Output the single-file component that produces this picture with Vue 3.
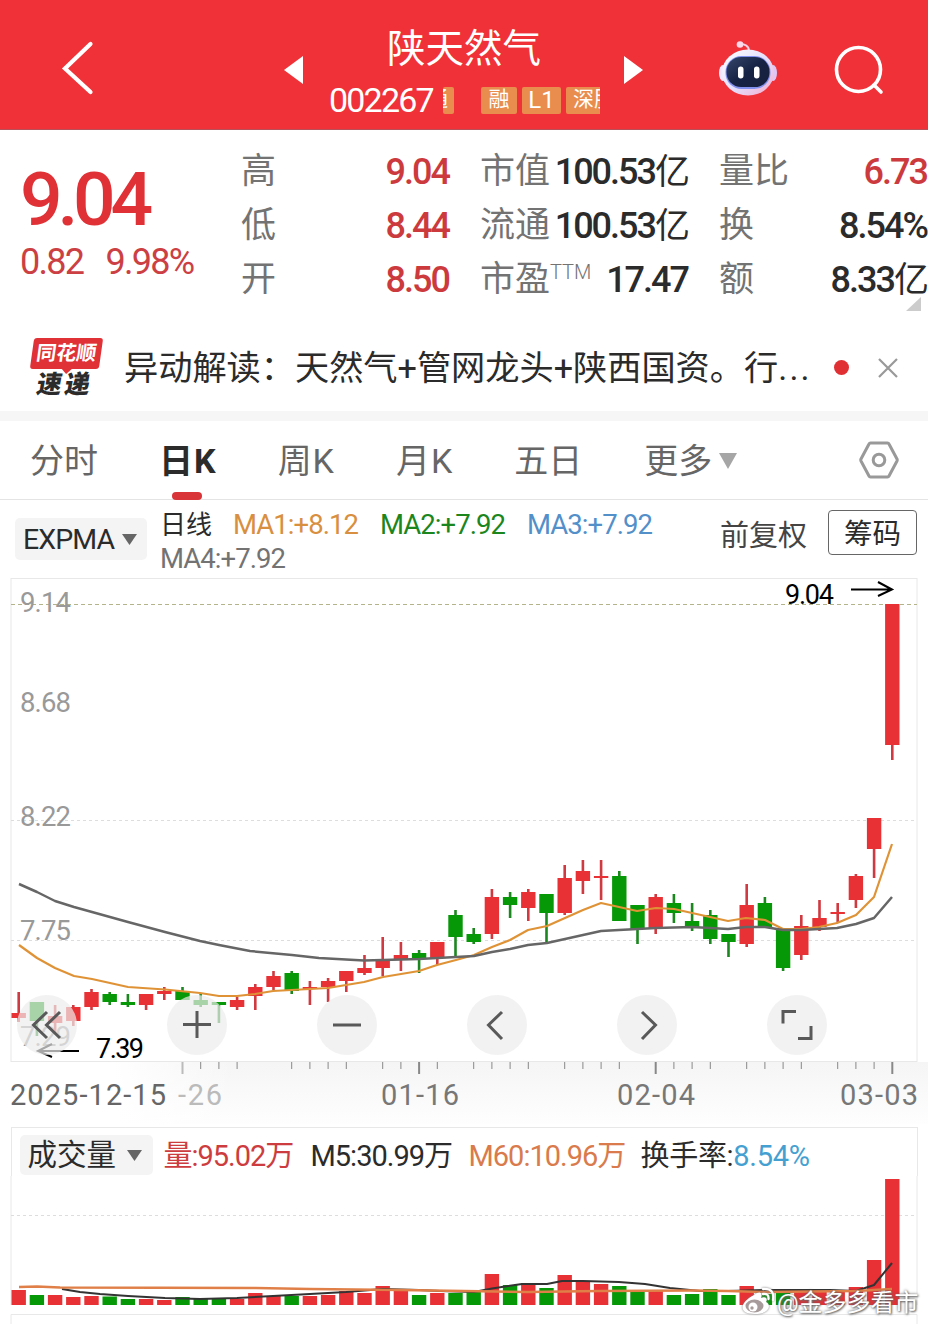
<script setup>
import { computed } from 'vue'

const stats = [
  [
    { label: '高', value: '9.04', up: true },
    { label: '低', value: '8.44', up: true },
    { label: '开', value: '8.50', up: true },
  ],
  [
    { label: '市值', value: '100.53', unit: '亿' },
    { label: '流通', value: '100.53', unit: '亿' },
    { label: '市盈', sup: 'TTM', value: '17.47' },
  ],
  [
    { label: '量比', value: '6.73', up: true },
    { label: '换', value: '8.54%' },
    { label: '额', value: '8.33', unit: '亿' },
  ],
]

const tabs = ['分时', '日K', '周K', '月K', '五日']
const activeTab = '日K'

// [direction, high, low, bodyTop, bodyBottom, volumeTop]
const days = [
  ['r', 992, 1022, 1013, 1018, 1290],
  ['g', 1002, 1036, 1002, 1021, 1295],
  ['r', 1005, 1033, 1016, 1023, 1295],
  ['r', 1005, 1026, 1007, 1021, 1297],
  ['r', 989, 1010, 992, 1007, 1296],
  ['g', 992, 1005, 994, 1002, 1296.5],
  ['g', 994, 1007, 1002, 1005, 1299],
  ['r', 994, 1010, 994, 1005, 1299],
  ['r', 987, 1000, 991, 994, 1300],
  ['g', 987, 1000, 991, 1000, 1297],
  ['g', 994, 1007, 1000, 1005, 1298],
  ['g', 1002, 1023, 1002, 1005, 1298],
  ['r', 997, 1010, 1000, 1007, 1299],
  ['r', 984, 1010, 987, 996, 1293],
  ['r', 971, 990, 976, 987, 1296],
  ['g', 971, 994, 973, 991, 1296],
  ['r', 981, 1005, 987, 989, 1296],
  ['r', 978, 1002, 981, 987, 1295],
  ['r', 971, 992, 971, 981, 1291],
  ['r', 955, 975, 968, 973, 1293],
  ['r', 937, 976, 961, 968, 1286],
  ['r', 942, 971, 955, 960, 1291],
  ['g', 950, 973, 953, 959, 1295],
  ['r', 942, 965, 942, 958, 1293],
  ['g', 910, 957, 915, 937, 1293],
  ['g', 928, 944, 934, 942, 1292],
  ['r', 889, 939, 897, 934, 1274],
  ['g', 892, 918, 897, 905, 1285],
  ['r', 889, 921, 892, 908, 1283],
  ['g', 894, 942, 894, 913, 1288],
  ['r', 865, 915, 878, 913, 1275],
  ['r', 860, 894, 871, 881, 1281],
  ['r', 860, 900, 876, 878, 1284],
  ['g', 871, 921, 876, 921, 1286],
  ['g', 905, 944, 905, 929, 1292],
  ['r', 894, 934, 897, 929, 1291],
  ['g', 894, 923, 903, 913, 1295],
  ['g', 903, 931, 921, 927, 1294],
  ['g', 910, 944, 915, 939, 1289],
  ['g', 934, 957, 934, 942, 1295],
  ['r', 884, 947, 905, 944, 1286],
  ['g', 897, 927, 903, 927, 1294],
  ['g', 929, 971, 929, 968, 1292],
  ['r', 915, 960, 926, 955, 1291],
  ['r', 900, 931, 918, 927, 1291],
  ['r', 903, 923, 912, 914, 1292],
  ['r', 874, 908, 876, 900, 1287],
  ['r', 818, 878, 818, 849, 1260],
  ['r', 604, 760, 604, 745, 1179],
]

const STEP = 18.2
const BASE = 1305

const candles = computed(() =>
  days.map(([dir, high, low, top, bottom, vol], i) => ({
    x: 18.7 + i * STEP,
    fill: dir === 'r' ? '#e83135' : '#079807',
    wick: dir === 'r' ? '#cf3a40' : '#1c871f',
    high,
    low,
    top,
    bottom,
    vol,
  })),
)

const majorTicks = [9, 22, 35, 48]
const skippedTicks = [13, 14, 19, 24, 29, 34, 39, 44]
const ticks = days
  .map((_, i) => ({ x: 18.7 + i * STEP, i, major: majorTicks.includes(i) }))
  .filter(({ i }) => i >= 9 && !skippedTicks.includes(i))

const ma1 =
  '19,945 37,958 55,968 74,976 92,979 128,987 165,989.5 200,993 219,996 237,996 255,994 273,991 310,989 328,988 346,985 364,982 383,977 401,974 419,971 437,965 456,960 474,955 492,947 510,940 528,930 547,926 565,918 583,910 601,903 619,907 637,911 656,908 674,909 692,913 710,917 728,921 746,918 765,920 783,929 801,929 819,927 837,923 856,915 874,897 892,844'
const ma4 =
  '19,884 37,892 55,901 74,907 92,912 128,922 165,932 200,941 219,945 250,951 292,955 319,958 364,960.5 383,960 419,959 456,957 474,956 492,952 510,949 528,945 547,943 583,935 601,931 619,930 656,928 692,927 728,929 746,927 765,927 783,930 801,930 819,929 837,928 856,924 874,918 892,897'
const volM5 =
  '62,1289 80,1292 100,1294 128,1296 165,1298 200,1299 237,1298 273,1296 310,1294 346,1292 383,1289 419,1290 440,1291 474,1292 492,1288.5 522,1284 547,1284 562,1281 583,1281 619,1282 645,1284 670,1288 700,1291 728,1291 765,1290 801,1290 830,1290 856,1291 874,1285 892,1263'
const volM60 =
  '19,1287 37,1286.5 60,1287.5 256,1288 310,1289 400,1290 464,1291 528,1292 600,1291 692,1290.5 728,1291 765,1292 856,1291 892,1289'

const priceLabels = [
  { text: '9.14', y: 612 },
  { text: '8.68', y: 712 },
  { text: '8.22', y: 826 },
  { text: '7.75', y: 940 },
  { text: '7.29', y: 1046 },
]

const controls = [
  'M30 17 L16.500 30 L30 43 M43 17 L29.500 30 L43 43',
  'M16 29.5 H44 M30 16 V43',
  'M16 30 H44',
  'M35 17 L21.500 30 L35 44',
  'M25 17 L38.500 30 L25 44',
  'M16 28.500 V16.500 H29 M31 43.500 H44 V31',
]
</script>

<template>
  <div class="page">
    <header class="topbar">
      <svg class="back" width="34" height="56" viewBox="0 0 34 56">
        <path d="M29.500 4 L4 28.500 L29.500 52" fill="none" stroke="#fff" stroke-width="4.200" stroke-linecap="round" />
      </svg>
      <svg class="prev" width="20" height="30" viewBox="0 0 20 30"><path d="M0 15 L19 1 V29 Z" fill="#fff" /></svg>
      <div class="stock">
        <div class="stock-name">陕天然气</div>
        <div class="stock-line">
          <span class="stock-code">002267</span>
          <span class="tags">
            <span class="tag tag--cut"><i>通</i></span>
            <span class="tag tag--rong">融</span>
            <span class="tag tag--level">L1</span>
            <span class="tag tag--end">深股通</span>
          </span>
        </div>
      </div>
      <svg class="next" width="20" height="30" viewBox="0 0 20 30"><path d="M20 15 L1 1 V29 Z" fill="#fff" /></svg>
      <svg class="robot" width="60" height="56" viewBox="0 0 60 56">
        <defs>
          <linearGradient id="shell" x1="0" y1="0" x2="1" y2="1">
            <stop offset="0" stop-color="#fff" />
            <stop offset="0.55" stop-color="#e3defb" />
            <stop offset="1" stop-color="#f6a9cb" />
          </linearGradient>
          <linearGradient id="face" x1="0" y1="0" x2="1" y2="1">
            <stop offset="0" stop-color="#34466b" />
            <stop offset="0.5" stop-color="#172344" />
            <stop offset="1" stop-color="#17203d" />
          </linearGradient>
        </defs>
        <path d="M31 10 Q30 4 22 4" fill="none" stroke="#f7cfe4" stroke-width="2" />
        <circle cx="22" cy="4.500" r="3.300" fill="#fbd9eb" />
        <ellipse cx="5" cy="33" rx="4" ry="8" fill="#f3e5fc" />
        <ellipse cx="55" cy="33" rx="4" ry="8" fill="#dec7f6" />
        <ellipse cx="30" cy="32.500" rx="26" ry="23" fill="url(#shell)" />
        <rect x="7.500" y="16" width="45" height="33" rx="16" fill="#8391ee" />
        <rect x="8.500" y="17" width="43" height="30" rx="14.500" fill="url(#face)" />
        <rect x="20" y="26.500" width="5.500" height="12" rx="2.700" fill="#fff" />
        <rect x="36" y="26.500" width="5.500" height="12" rx="2.700" fill="#fff" />
      </svg>
      <svg class="search" width="52" height="52" viewBox="0 0 52 52">
        <g fill="none" stroke="#fff" stroke-width="3.600" stroke-linecap="round">
          <circle cx="25.500" cy="24.500" r="22" />
          <path d="M41 40 L48 47" />
        </g>
      </svg>
    </header>

    <section class="quote">
      <div class="price-box">
        <div class="price">9.04</div>
        <div class="change"><span>0.82</span><span>9.98%</span></div>
      </div>
      <div v-for="(col, c) in stats" :key="c" class="stat-col">
        <div v-for="row in col" :key="row.label" class="stat">
          <span class="stat-label">{{ row.label }}<sup v-if="row.sup">{{ row.sup }}</sup></span>
          <span class="stat-value" :class="{ 'stat-value--up': row.up }">{{ row.value }}<b v-if="row.unit">{{ row.unit }}</b></span>
        </div>
      </div>
      <svg class="corner" width="15" height="14" viewBox="0 0 15 14"><path d="M15 0 V14 H0 Z" fill="#ccc" /></svg>
    </section>

    <section class="news">
      <div class="logo">
        <div class="logo-top"><span>同花顺</span></div>
        <div class="logo-bottom">速递</div>
      </div>
      <div class="news-text">异动解读：天然气+管网龙头+陕西国资。行<span>...</span></div>
      <span class="dot"></span>
      <svg class="close" width="22" height="22" viewBox="0 0 22 22">
        <path d="M2 2 L20 20 M20 2 L2 20" stroke="#999" stroke-width="2.200" />
      </svg>
    </section>

    <nav class="tabs">
      <span
        v-for="tab in tabs"
        :key="tab"
        class="tab"
        :class="{ 'tab--active': tab === activeTab, 'tab--k': tab.endsWith('K') }"
      >{{ tab }}</span>
      <span class="tab more">更多<svg width="18" height="16" viewBox="0 0 18 16"><path d="M0 0 H18 L9 16 Z" fill="#a6a6a6" /></svg></span>
      <svg class="gear" width="40" height="38" viewBox="0 0 40 38">
        <g fill="none" stroke="#999" stroke-width="3">
          <path d="M11.500 2 H28.500 Q29.500 2 30 3 L38 18 Q38.500 19 38 20 L30 35 Q29.500 36 28.500 36 H11.500 Q10.500 36 10 35 L2 20 Q1.500 19 2 18 L10 3 Q10.500 2 11.500 2 Z" />
          <circle cx="20" cy="19" r="5.800" />
        </g>
      </svg>
    </nav>

    <section class="indicator">
      <div class="select">EXPMA<svg width="15" height="11" viewBox="0 0 15 11"><path d="M0 0 H15 L7.500 11 Z" fill="#666" /></svg></div>
      <div class="legend">
        <span class="legend-title">日线</span>
        <span class="ma ma--1">MA1:+8.12</span>
        <span class="ma ma--2">MA2:+7.92</span>
        <span class="ma ma--3">MA3:+7.92</span>
        <span class="ma ma--4">MA4:+7.92</span>
      </div>
      <span class="adjust">前复权</span>
      <span class="chips">筹码</span>
    </section>

    <section class="chart">
      <svg width="928" height="549" viewBox="0 578 928 549">
        <defs>
          <linearGradient id="axisShade" x1="0" y1="0" x2="0" y2="1">
            <stop offset="0" stop-color="#f5f5f5" />
            <stop offset="1" stop-color="#fefefe" />
          </linearGradient>
          <linearGradient id="axisFade" x1="0" y1="0" x2="1" y2="0">
            <stop offset="0" stop-color="#fff" />
            <stop offset="1" stop-color="#fff" stop-opacity="0" />
          </linearGradient>
        </defs>
        <rect x="115" y="1062" width="813" height="62" fill="url(#axisShade)" />
        <rect x="114" y="1062" width="120" height="63" fill="url(#axisFade)" />
        <rect x="11" y="578.500" width="906" height="483" fill="#fff" stroke="#e8e8e8" />
        <g stroke-width="1" fill="none">
          <path d="M11 604.500 H917" stroke="#b4b48a" stroke-dasharray="4 3" />
          <path d="M11 820.500 H917 M11 940.500 H917" stroke="#ddd" stroke-dasharray="3 3" />
        </g>
        <g class="price-axis">
          <text v-for="p in priceLabels" :key="p.text" x="20" :y="p.y" textLength="51">{{ p.text }}</text>
        </g>
        <g v-for="c in candles" :key="c.x">
          <rect :x="c.x - 1.300" :y="c.high" width="2.600" :height="c.low - c.high" :fill="c.wick" />
          <rect :x="c.x - 7.200" :y="c.top" width="14.400" :height="c.bottom - c.top" :fill="c.fill" />
        </g>
        <polyline :points="ma1" fill="none" stroke="#df9336" stroke-width="2.200" stroke-linejoin="round" />
        <polyline :points="ma4" fill="none" stroke="#666" stroke-width="2.500" stroke-linejoin="round" />
        <g fill="none" stroke="#000" stroke-width="2">
          <path d="M851 589.500 H892 M878 582 L892 589.500 L878 596" />
          <path d="M79 1051 H38 M52 1044 L38 1051 L52 1057" />
        </g>
        <text class="mark" x="785" y="604" textLength="49">9.04</text>
        <text class="mark" x="96" y="1058" textLength="48">7.39</text>
        <path
          v-for="t in ticks"
          :key="t.i"
          :d="`M${t.x} 1062 V${t.major ? 1074 : 1069}`"
          :stroke="t.i === 9 ? '#bbb' : '#888'"
          :stroke-width="t.major ? 2 : 1"
        />
        <g class="dates">
          <text class="date-first" x="10" y="1105" textLength="156">2025-12-15</text>
          <text class="date-faded" x="178" y="1105" textLength="44">-26</text>
          <text x="381" y="1105" textLength="78">01-16</text>
          <text x="617" y="1105" textLength="78">02-04</text>
          <text x="840" y="1105" textLength="78">03-03</text>
        </g>
      </svg>
      <div class="controls">
        <span v-for="d in controls" :key="d" class="control">
          <svg width="60" height="60" viewBox="0 0 60 60"><path :d="d" fill="none" stroke="#595959" stroke-width="3" /></svg>
        </span>
      </div>
    </section>

    <section class="volume">
      <div class="volume-head">
        <div class="select select--volume">成交量<svg width="15" height="11" viewBox="0 0 15 11"><path d="M0 0 H15 L7.500 11 Z" fill="#666" /></svg></div>
        <span class="vol vol--now">量:95.02万</span>
        <span class="vol vol--m5">M5:30.99万</span>
        <span class="vol vol--m60">M60:10.96万</span>
        <span class="vol vol--rate">换手率:<b>8.54%</b></span>
      </div>
      <svg width="928" height="148" viewBox="0 1176 928 148">
        <path d="M11 1176 V1305 M917 1176 V1305 M11 1324 V1314.500 H917 V1324" fill="none" stroke="#e8e8e8" />
        <path d="M11 1215.500 H917" stroke="#ddd" stroke-dasharray="3 3" />
        <rect v-for="c in candles" :key="c.x" :x="c.x - 7.200" :y="c.vol" width="14.400" :height="BASE - c.vol" :fill="c.fill" />
        <polyline :points="volM5" fill="none" stroke="#333" stroke-width="2" stroke-linejoin="round" />
        <polyline :points="volM60" fill="none" stroke="#e08048" stroke-width="2.400" stroke-linejoin="round" />
      </svg>
    </section>

    <div class="watermark">
      <svg width="34" height="30" viewBox="0 0 34 30">
        <path d="M13 8 C19 3 22 6 20 11 C25 9 27 12 25 15 C31 18 28 27 14 27 C-3 27 -2 16 13 8 Z" fill="#fff" />
        <ellipse cx="13.500" cy="19" rx="9" ry="6.500" fill="#a79c9b" />
        <circle cx="12" cy="20" r="4.500" fill="#fff" />
        <circle cx="11" cy="21" r="1.700" fill="#a79c9b" />
        <path d="M22 7 Q28 6 27.500 12 M22 2 Q34 1 32 13" fill="none" stroke="#fff" stroke-width="2.300" stroke-linecap="round" />
      </svg>
      <span>@金多多看市</span>
    </div>
  </div>
</template>

<style>
body {
  margin: 0;
  background: #fff;
}
</style>

<style scoped>
.page {
  position: relative;
  width: 928px;
  height: 1324px;
  overflow: hidden;
  background: #fff;
  color: #2b2b2b;
  font-family: Roboto, 'Noto Sans CJK SC', sans-serif;
  white-space: nowrap;
}

svg {
  display: block;
  flex: none;
}

.topbar {
  display: flex;
  box-sizing: border-box;
  height: 130px;
  padding-left: 61px;
  background: #f03138;
  border-bottom: 1px solid #b8505a;
  color: #fff;
}

.back {
  margin-top: 40px;
}

.prev {
  margin: 55px 0 0 189px;
}

.stock {
  width: 272px;
  margin-left: 25px;
}

.stock-name {
  height: 54px;
  padding-top: 22px;
  padding-left: 58px;
  font-size: 38.500px;
  line-height: 54px;
}

.stock-line {
  display: flex;
  align-items: center;
  height: 28px;
  margin-top: 10px;
}

.stock-code {
  width: 114px;
  font-size: 34px;
  line-height: 30px;
  letter-spacing: -1.800px;
}

.tags {
  display: flex;
  gap: 5px;
  width: 157px;
  height: 27px;
  overflow: hidden;
}

.tag {
  flex: none;
  height: 27px;
  border-radius: 2px;
  background: #e98d4e;
  font-size: 21px;
  line-height: 25px;
  text-align: center;
}

.tag--cut {
  display: flex;
  justify-content: flex-end;
  width: 11px;
  margin-right: 22px;
  overflow: hidden;
}

.tag--cut i {
  font-style: normal;
  margin-right: 6px;
}

.tag--rong {
  width: 36px;
}

.tag--level {
  width: 39px;
  font-size: 24px;
  line-height: 27px;
}

.tag--end {
  width: 78px;
  padding-left: 7px;
  text-align: left;
}

.next {
  margin: 55px 0 0 22px;
}

.robot {
  margin: 40px 0 0 75px;
}

.search {
  margin: 45px 0 0 55px;
}

.quote {
  position: relative;
  display: flex;
  height: 194px;
}

.price-box {
  width: 241px;
  color: #e03236;
}

.price {
  height: 70px;
  padding: 34px 0 0 20px;
  font-size: 75px;
  font-weight: 500;
  line-height: 70px;
  letter-spacing: -5.200px;
}

.change {
  display: flex;
  gap: 22px;
  padding: 10px 0 0 20px;
  color: #cc3f43;
  font-size: 36px;
  line-height: 36px;
  letter-spacing: -1.700px;
}

.stat-col {
  display: flex;
  flex-direction: column;
  width: 209px;
  padding-top: 14px;
}

.stat-col + .stat-col {
  margin-left: 30px;
}

.stat {
  display: flex;
  justify-content: space-between;
  height: 54px;
  line-height: 54px;
}

.stat-label {
  padding-top: 1px;
  color: #737373;
  font-size: 35px;
  line-height: 54px;
}

.stat-label sup {
  font-size: 20px;
  font-weight: 300;
  line-height: 0;
  vertical-align: 12px;
}

.stat-value {
  padding-top: 1px;
  margin-right: 1px;
  font-size: 36px;
  font-weight: 500;
  letter-spacing: -2px;
}

.stat-value--up {
  color: #cc3a3e;
}

.stat-value b {
  font-size: 35px;
  font-weight: 400;
}

.corner {
  position: absolute;
  right: 7px;
  bottom: 13px;
}

.news {
  display: flex;
  align-items: center;
  box-sizing: border-box;
  height: 97px;
  padding: 0 29px 0 30px;
  border-bottom: 10px solid #f6f6f6;
}

.logo {
  width: 74px;
  height: 60px;
  margin-right: 20px;
}

.logo-top {
  position: relative;
  width: 69px;
  height: 31px;
  margin-left: 2px;
  border-radius: 3px;
  background: #e03137;
  color: #fff;
  font-size: 20px;
  font-weight: 700;
  line-height: 30px;
  text-align: center;
  transform: skewX(-8deg);
}

.logo-top::after {
  content: '';
  position: absolute;
  left: 32px;
  top: 31px;
  border: 5px solid transparent;
  border-top-color: #e03137;
  border-bottom: 0;
}

.logo-bottom {
  padding-left: 7px;
  font-size: 25px;
  font-weight: 900;
  line-height: 31px;
  letter-spacing: 3px;
  transform: skewX(-10deg);
}

.news-text {
  width: 690px;
  font-size: 34.200px;
  line-height: 50px;
}

.news-text span {
  letter-spacing: 2.200px;
}

.dot {
  width: 15px;
  height: 15px;
  margin-left: 20px;
  border-radius: 50%;
  background: #e03034;
}

.close {
  margin-left: 28px;
}

.tabs {
  display: flex;
  align-items: center;
  box-sizing: border-box;
  height: 79px;
  padding-left: 30px;
  border-bottom: 1px solid #e4e4e4;
}

.tab {
  position: relative;
  margin-right: 61px;
  padding-top: 2px;
  color: #666;
  font-size: 34px;
  line-height: 77px;
}

.tab--k {
  letter-spacing: 1px;
}

.tab--active {
  color: #2b2b2b;
  font-weight: 700;
}

.tab--active::after {
  content: '';
  position: absolute;
  left: 13px;
  bottom: 0;
  width: 30px;
  height: 8px;
  border-radius: 4px;
  background: #d93438;
}

.more {
  display: flex;
  align-items: center;
  gap: 7px;
  margin-right: 0;
  margin-left: 1px;
}

.gear {
  margin-left: auto;
  margin-right: 29px;
}

.indicator {
  display: flex;
  height: 78px;
}

.select {
  display: flex;
  align-items: center;
  justify-content: space-between;
  box-sizing: border-box;
  width: 132px;
  height: 42px;
  margin: 18px 13px 0 15px;
  padding: 0 10px 0 8px;
  border-radius: 5px;
  background: #f4f4f4;
  font-size: 28.500px;
  letter-spacing: -0.900px;
}

.legend {
  display: flex;
  flex-wrap: wrap;
  align-content: flex-start;
  width: 560px;
  padding-top: 8px;
  font-size: 26px;
  line-height: 34px;
}

.legend-title {
  width: 73px;
}

.ma {
  width: 147px;
  font-size: 27.500px;
  letter-spacing: -0.950px;
}

.ma--1 {
  color: #d98f40;
}

.ma--2 {
  color: #1c861e;
}

.ma--3 {
  color: #538fc9;
}

.ma--4 {
  color: #737373;
}

.adjust {
  width: 108px;
  margin-top: 15px;
  color: #444;
  font-size: 29px;
  line-height: 42px;
}

.chips {
  box-sizing: border-box;
  width: 89px;
  height: 45px;
  margin-top: 10px;
  padding-top: 2px;
  border: 1px solid #666;
  border-radius: 4px;
  font-size: 28.500px;
  line-height: 43px;
  text-align: center;
}

.chart {
  position: relative;
}

.price-axis text {
  fill: #999;
  font-size: 27.500px;
}

.mark {
  fill: #000;
  font-size: 27px;
}

.dates text {
  fill: #777;
  font-size: 29px;
}

.dates .date-first {
  fill: #666;
}

.dates .date-faded {
  fill: #bbb;
}

.controls {
  position: absolute;
  top: 417px;
  left: 17px;
  display: flex;
  gap: 90px;
}

.control {
  width: 60px;
  height: 60px;
  border-radius: 50%;
  background: rgba(236, 236, 236, 0.7);
}

.volume-head {
  display: flex;
  box-sizing: border-box;
  width: 907px;
  height: 49px;
  margin-left: 10.500px;
  border: 1px solid #e8e8e8;
  border-bottom: 0;
}

.select--volume {
  width: 133px;
  height: 40px;
  margin: 7px 11px 0 8px;
  padding-right: 11px;
  font-size: 29.500px;
  line-height: 38px;
  letter-spacing: 0;
}

.vol {
  font-size: 29px;
  line-height: 56px;
  letter-spacing: -1px;
}

.vol--now {
  width: 147px;
  color: #cd3d40;
}

.vol--m5 {
  width: 158px;
}

.vol--m60 {
  width: 172px;
  color: #d97b4c;
}

.vol--rate {
  letter-spacing: -0.300px;
}

.vol b {
  color: #45a0d2;
  font-weight: 400;
}

.watermark {
  position: absolute;
  left: 741px;
  top: 1287px;
  display: flex;
  color: #fff;
  font-size: 24px;
  line-height: 32px;
  text-shadow: 0 0 3px #555, 1px 1px 2px #777;
}

.watermark svg {
  margin-right: 2px;
  filter: drop-shadow(0 0 1px #777);
}
</style>
